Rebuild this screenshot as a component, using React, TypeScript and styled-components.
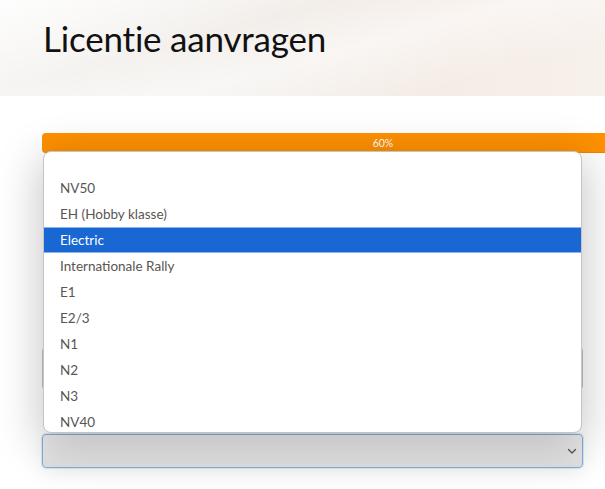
import React from "react";
import styled, { createGlobalStyle } from "styled-components";

const Global = createGlobalStyle`
  html, body { margin: 0; padding: 0; background: #fff; overflow: hidden; }
  body { font-family: "Lato", "Open Sans", sans-serif; color: #333; }
  * { box-sizing: border-box; }
`;

const Page = styled.div`
  width: 605px;
  height: 489px;
  overflow: hidden;
  position: relative;
`;

const Hero = styled.header`
  height: 96px;
  padding: 16px 0 0 43px;
  background:
    linear-gradient(165deg, rgba(255,255,255,0.85) 0%, rgba(255,255,255,0) 35%, rgba(255,255,255,0.5) 55%, rgba(255,255,255,0) 80%),
    linear-gradient(100deg, #f6f5f3 0%, #f2eeea 45%, #f5ece5 75%, #f7f1ec 100%);
`;

const Title = styled.h1`
  margin: 0;
  font-family: "Lato", sans-serif;
  font-weight: 400;
  font-size: 35px;
  line-height: 44px;
  color: #111;
  letter-spacing: -0.2px;
`;

const Main = styled.main`
  padding: 37px 22px 0 42px;
`;

const Form = styled.div`
  position: relative;
  display: flex;
  flex-direction: column;
`;

const Progress = styled.div`
  height: 20px;
  margin-right: -141px;
  border-radius: 4px 0 0 4px;
  background: #ff9100;
  box-shadow: inset 0 -1px 0 rgba(0, 0, 0, 0.08);
  display: flex;
  align-items: center;
  justify-content: center;
  color: #fff;
  font-size: 10.5px;
  line-height: 20px;
`;

const Fields = styled.div`
  display: flex;
  flex-direction: column;
  padding-top: 194px;
`;

const TextInput = styled.div`
  height: 43px;
  border: 1px solid #c4c4c4;
  border-radius: 4px;
`;

const SelectBox = styled.div`
  height: 34px;
  margin-top: 44px;
  border: 1px solid #86aedc;
  border-radius: 4px;
  background: linear-gradient(180deg, #efefef 0%, #e0e0e0 100%);
  box-shadow: 0 0 0 1px rgba(134, 174, 220, 0.25), 0 6px 20px rgba(0, 0, 0, 0.06);
  display: flex;
  align-items: center;
  justify-content: flex-end;
  padding-right: 4px;
  color: #555;
`;

const Popup = styled.div`
  position: absolute;
  left: 1px;
  top: 18px;
  width: 539px;
  height: 282px;
  background: #fff;
  border: 1px solid #c4c4c4;
  border-radius: 8px;
  overflow: hidden;
  box-shadow: 0 10px 44px 4px rgba(0, 0, 0, 0.22);
`;

const List = styled.ul`
  list-style: none;
  margin: -3px 0 0;
  padding: 0;
`;

const Option = styled.li<{ $active?: boolean }>`
  height: 26px;
  line-height: 26px;
  padding-left: 16px;
  font-size: 13.5px;
  color: ${(p) => (p.$active ? "#fff" : "#5a5552")};
  background: ${(p) => (p.$active ? "#1967d2" : "transparent")};
  box-shadow: ${(p) => (p.$active ? "inset 0 1px 0 #8db4ea, inset 0 -1px 0 #8db4ea" : "none")};
`;

const options = [
  "",
  "NV50",
  "EH (Hobby klasse)",
  "Electric",
  "Internationale Rally",
  "E1",
  "E2/3",
  "N1",
  "N2",
  "N3",
  "NV40",
];

const Chevron = () => (
  <svg width="12" height="12" viewBox="0 0 12 12" fill="none">
    <path d="M2.5 4.5 L6 8 L9.5 4.5" stroke="#555" strokeWidth="1.3" strokeLinecap="round" strokeLinejoin="round" />
  </svg>
);

export default function App() {
  return (
    <>
      <Global />
      <Page>
        <Hero>
          <Title>Licentie aanvragen</Title>
        </Hero>
        <Main>
          <Form>
            <Progress>60%</Progress>
            <Fields>
              <TextInput />
              <SelectBox>
                <Chevron />
              </SelectBox>
            </Fields>
            <Popup>
              <List>
                {options.map((o, i) => (
                  <Option key={i} $active={o === "Electric"}>
                    {o || "\u00a0"}
                  </Option>
                ))}
              </List>
            </Popup>
          </Form>
        </Main>
      </Page>
    </>
  );
}
